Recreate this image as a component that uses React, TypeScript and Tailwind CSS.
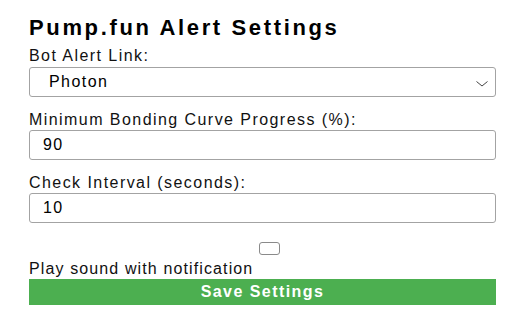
import React, { useState } from 'react';

const font = { fontFamily: '"Liberation Sans", Arial, sans-serif' };

const App: React.FC = () => {
  const [bot, setBot] = useState('photon');
  const [progress, setProgress] = useState('90');
  const [interval, setIntervalValue] = useState('10');
  const [sound, setSound] = useState(false);

  return (
    <div className="w-[512px] h-[320px] bg-white overflow-hidden text-[#111]" style={font}>
      <div className="ml-[29px] w-[467px] pt-[16px]">
        {/* Title */}
        <h2 className="text-[22px] leading-[24px] font-bold tracking-[0.12em] text-black">
          Pump.fun Alert Settings
        </h2>

        {/* Bot link */}
        <label className="block mt-[6px] text-[16px] leading-[20px] tracking-[0.09em]">
          Bot Alert Link:
        </label>
        <div className="relative mt-[1px]">
          <select
            value={bot}
            onChange={(e) => setBot(e.target.value)}
            className="appearance-none w-full h-[30px] pl-[19px] pr-8 border border-[#a3a3a3] rounded-[3px] bg-white text-[16px] tracking-[0.09em] text-black outline-none"
            style={font}
          >
            <option value="photon">Photon</option>
            <option value="bullx">BullX</option>
            <option value="trojan">Trojan</option>
          </select>
          <svg
            className="absolute right-[8px] top-[14px] pointer-events-none"
            width="12"
            height="6"
            viewBox="0 0 12 6"
            fill="none"
          >
            <path d="M0.5 0.5 L6 5 L11.5 0.5" stroke="#444" strokeWidth="1" />
          </svg>
        </div>

        {/* Progress */}
        <label className="block mt-[13px] text-[16px] leading-[20px] tracking-[0.09em]">
          Minimum Bonding Curve Progress (%):
        </label>
        <input
          type="text"
          value={progress}
          onChange={(e) => setProgress(e.target.value)}
          className="block w-full h-[30px] pl-[13px] border border-[#a3a3a3] rounded-[3px] text-[16px] tracking-[0.09em] text-black outline-none"
          style={font}
        />

        {/* Interval */}
        <label className="block mt-[13px] text-[16px] leading-[20px] tracking-[0.09em]">
          Check Interval (seconds):
        </label>
        <input
          type="text"
          value={interval}
          onChange={(e) => setIntervalValue(e.target.value)}
          className="block w-full h-[30px] pl-[13px] border border-[#a3a3a3] rounded-[3px] text-[16px] tracking-[0.09em] text-black outline-none"
          style={font}
        />

        {/* Sound */}
        <div className="flex justify-center pl-[13px] mt-[19px]">
          <button
            type="button"
            onClick={() => setSound(!sound)}
            className={`w-[21px] h-[13px] rounded-[3px] border border-[#8a8a8a] ${sound ? 'bg-[#1a73e8]' : 'bg-white'}`}
            aria-pressed={sound}
          />
        </div>
        <div className="mt-[4px] text-[16px] leading-[20px] tracking-[0.07em]">
          Play sound with notification
        </div>

        <button
          type="button"
          className="block w-full h-[26px] bg-[#4caf50] text-white text-[16px] font-bold tracking-[0.09em] leading-[26px]"
          style={font}
        >
          Save Settings
        </button>
      </div>
    </div>
  );
};

export default App;
